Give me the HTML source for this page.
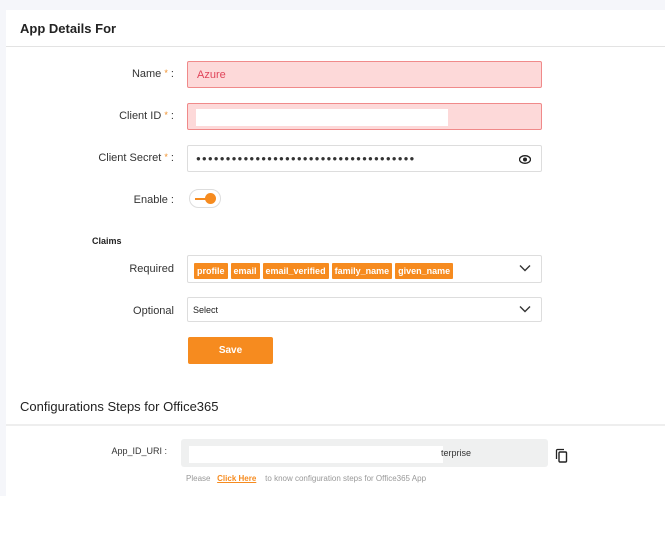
<!DOCTYPE html>
<html><head><style>
*{box-sizing:border-box;margin:0;padding:0}
body{width:665px;height:545px;background:#fff;font-family:"Liberation Sans",sans-serif;position:relative;overflow:hidden}
.abs{position:absolute}
.lbl{position:absolute;right:491px;font-size:11px;color:#333;text-align:right;white-space:nowrap}
.req{color:#f0902a;font-size:9px;vertical-align:top}
.inp{position:absolute;left:187px;width:355px;border:1px solid #ddd;border-radius:2px;background:#fff}
.err{background:#fdd9d9;border-color:#f08a8a}
.tag{display:inline-block;background:#f68b1f;color:#fff;font-size:9px;font-weight:bold;height:16px;line-height:16px;padding:0 3px;margin-right:3px;border-radius:1px}
.chev{position:absolute;right:10px;top:8px}
</style></head><body>
<div class="abs" style="left:0;top:0;width:665px;height:10px;background:#f5f6fa"></div>
<div class="abs" style="left:0;top:0;width:6px;height:496px;background:#f5f6fa"></div>
<div class="abs" style="left:6px;top:46px;width:659px;height:1px;background:#e3e3e3"></div>
<div class="abs" style="left:20px;top:21px;font-size:13px;font-weight:bold;color:#222">App Details For</div>

<div class="lbl" style="top:68px">Name <span class="req">*</span> :</div>
<div class="inp err" style="top:61px;height:27px"><span class="abs" style="left:9px;top:7px;font-size:11px;color:#e0455a">Azure</span></div>

<div class="lbl" style="top:110px">Client ID <span class="req">*</span> :</div>
<div class="inp err" style="top:103px;height:27px"><div class="abs" style="left:8px;top:5px;width:252px;height:17px;background:#fff"></div></div>

<div class="lbl" style="top:152px">Client Secret <span class="req">*</span> :</div>
<div class="inp" style="top:145px;height:27px"><span class="abs" style="left:8px;top:8px;font-size:8px;letter-spacing:1.1px;color:#333;white-space:nowrap">●●●●●●●●●●●●●●●●●●●●●●●●●●●●●●●●●●●●●</span>
<svg class="abs" style="right:10px;top:9px" width="12" height="9" viewBox="0 0 12 9"><ellipse cx="6" cy="4.5" rx="5.5" ry="3.8" fill="none" stroke="#222" stroke-width="1.3"/><circle cx="6" cy="4.5" r="2" fill="#222"/></svg></div>

<div class="lbl" style="top:194px">Enable :</div>
<div class="abs" style="left:189px;top:189px;width:32px;height:19px;border:1px solid #ddd;border-radius:10px;background:#fff">
<div class="abs" style="left:5px;top:8px;width:14px;height:2px;background:#f68b1f"></div>
<div class="abs" style="left:15px;top:3px;width:11px;height:11px;border-radius:50%;background:#f68b1f"></div></div>

<div class="abs" style="left:92px;top:236px;font-size:9px;font-weight:bold;color:#222">Claims</div>
<div class="lbl" style="top:263px">Required</div>
<div class="inp" style="top:255px;height:28px;padding:5px 0 0 6px"><span class="tag">profile</span><span class="tag">email</span><span class="tag">email_verified</span><span class="tag">family_name</span><span class="tag">given_name</span>
<svg class="chev" width="12" height="8" viewBox="0 0 12 8"><path d="M1 1.5l5 5 5-5" fill="none" stroke="#333" stroke-width="1.4"/></svg></div>

<div class="lbl" style="top:305px">Optional</div>
<div class="inp" style="top:297px;height:25px"><span class="abs" style="left:5px;top:7px;font-size:9px;color:#222">Select</span>
<svg class="chev" style="top:7px" width="12" height="8" viewBox="0 0 12 8"><path d="M1 1.5l5 5 5-5" fill="none" stroke="#333" stroke-width="1.4"/></svg></div>

<div class="abs" style="left:188px;top:337px;width:85px;height:27px;background:#f68b1f;border-radius:2px;color:#fff;font-size:10px;font-weight:bold;text-align:center;line-height:27px">Save</div>

<div class="abs" style="left:20px;top:399px;font-size:13px;color:#222">Configurations Steps for Office365</div>
<div class="abs" style="left:6px;top:424px;width:659px;height:2px;background:#eee"></div>
<div class="abs" style="left:0;top:426px;width:6px;height:70px;background:#f5f6fa"></div>

<div class="lbl" style="top:446px;right:498px;font-size:9px">App_ID_URI :</div>
<div class="abs" style="left:181px;top:439px;width:367px;height:28px;background:#eff0f0;border-radius:3px">
<div class="abs" style="left:8px;top:7px;width:254px;height:17px;background:#fff"></div>
<span class="abs" style="left:260px;top:9px;font-size:9px;color:#333">terprise</span></div>
<svg class="abs" style="left:555px;top:448px" width="13" height="15" viewBox="0 0 13 15"><path d="M1.5 11V2.5A1 1 0 0 1 2.5 1.5H9" fill="none" stroke="#222" stroke-width="1.3"/><rect x="4" y="4" width="7.5" height="10" rx="1" fill="none" stroke="#222" stroke-width="1.4"/></svg>
<div class="abs" style="left:186px;top:474px;font-size:8px;color:#999;white-space:nowrap">Please &nbsp;&nbsp;<span style="color:#f68b1f;text-decoration:underline;font-weight:bold">Click Here</span>&nbsp;&nbsp;&nbsp; to know configuration steps for Office365 App</div>
</body></html>
